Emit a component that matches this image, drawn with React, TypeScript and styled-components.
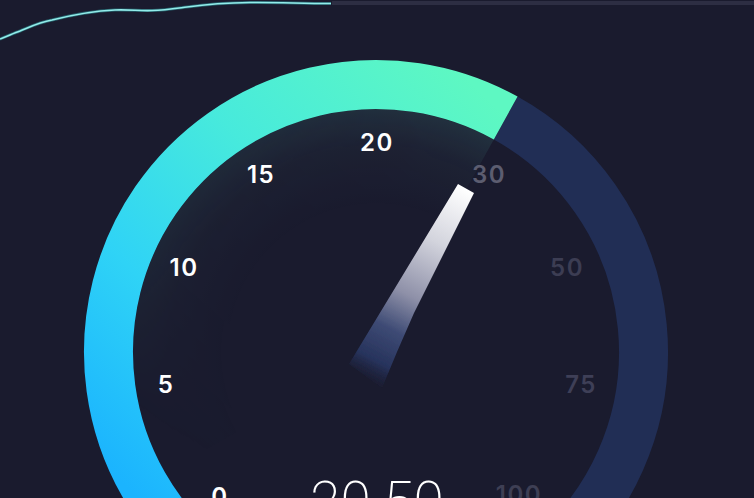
import React from "react";
import styled, { createGlobalStyle } from "styled-components";

const Global = createGlobalStyle`
  html, body { margin: 0; padding: 0; background: #1a1b2e; overflow: hidden; }
`;

const Page = styled.div`
  width: 754px;
  height: 498px;
  overflow: hidden;
  background: #1a1b2e;
  display: flex;
  flex-direction: column;
`;

const Header = styled.div`
  height: 42px;
  display: flex;
  align-items: flex-start;
  flex: none;
`;

const Wave = styled.svg`
  width: 332px;
  height: 42px;
  display: block;
  flex: none;
`;

const Rule = styled.div`
  flex: 1;
  height: 4px;
  margin-top: 1px;
  background: #2d2e43;
`;

const Gauge = styled.div`
  position: relative;
  flex: 1;
`;

const Dial = styled.svg`
  display: block;
  width: 754px;
  height: 456px;
`;

const Tick = styled.span<{ $x: number; $y: number; $tone: string }>`
  position: absolute;
  left: ${(p) => p.$x}px;
  top: ${(p) => p.$y - 42}px;
  transform: translate(-50%, -50%);
  font-family: "Inter", "Liberation Sans", sans-serif;
  font-size: 24px;
  font-weight: 600;
  letter-spacing: 1.5px;
  line-height: 1;
  color: ${(p) => p.$tone};
`;

const Speed = styled.span`
  position: absolute;
  left: 377px;
  top: 433px;
  transform: translateX(-50%);
  font-family: "Roboto", "Liberation Sans", sans-serif;
  font-size: 55px;
  font-weight: 200;
  line-height: 1;
  color: #ffffff;
`;

const CX = 376;
const CY = 352;
const RM = 267.5;
const RI = 243;

const pt = (deg: number, r: number) => {
  const a = (deg * Math.PI) / 180;
  return `${(CX + r * Math.sin(a)).toFixed(2)} ${(CY - r * Math.cos(a)).toFixed(2)}`;
};
const arc = (from: number, to: number, r: number) =>
  `M ${pt(from, r)} A ${r} ${r} 0 ${to - from > 180 ? 1 : 0} 1 ${pt(to, r)}`;
const sector = (from: number, to: number, r: number) =>
  `M ${CX} ${CY} L ${pt(from, r)} A ${r} ${r} 0 ${to - from > 180 ? 1 : 0} 1 ${pt(to, r)} Z`;

const ticks: { label: string; x: number; y: number; tone: string }[] = [
  { label: "0", x: 220, y: 497, tone: "#ffffff" },
  { label: "5", x: 166, y: 385, tone: "#ffffff" },
  { label: "10", x: 184, y: 268, tone: "#ffffff" },
  { label: "15", x: 261, y: 175, tone: "#ffffff" },
  { label: "20", x: 377, y: 143, tone: "#ffffff" },
  { label: "30", x: 489, y: 175, tone: "#5c5d70" },
  { label: "50", x: 567, y: 268, tone: "#3c3d53" },
  { label: "75", x: 581, y: 385, tone: "#3e3f57" },
  { label: "100", x: 519, y: 495, tone: "#3e3f54" },
];

const wavePath =
  "M0 39 C8 36 14 33 20 31 C32 26 40 22 52 20 C68 16 92 11 115 10 C130 9.500 140 11 152 10.500 C165 10 175 8.500 187 7 C205 4.500 225 2.800 250 2.500 C280 2.200 300 3.500 331 3.500";

export default function App() {
  return (
    <Page>
      <Global />
      <Header>
        <Wave viewBox="0 0 332 42">
          <path d={wavePath} fill="none" stroke="#2f9ea3" strokeWidth="3" strokeOpacity="0.55" />
          <path d={wavePath} fill="none" stroke="#93ecea" strokeWidth="1.6" />
        </Wave>
        <Rule />
      </Header>
      <Gauge>
        <Dial viewBox="0 42 754 456">
          <defs>
            <linearGradient id="fill" gradientUnits="userSpaceOnUse" x1="130" y1="490" x2="500" y2="110">
              <stop offset="0" stopColor="#1bb4fe" />
              <stop offset="0.3" stopColor="#2fd3f6" />
              <stop offset="0.62" stopColor="#47eadc" />
              <stop offset="1" stopColor="#5ef8c2" />
            </linearGradient>
            <radialGradient id="glow" gradientUnits="userSpaceOnUse" cx={CX} cy={CY} r={RI}>
              <stop offset="0.6" stopColor="#6fd0c0" stopOpacity="0" />
              <stop offset="0.85" stopColor="#6fd0c0" stopOpacity="0.04" />
              <stop offset="1" stopColor="#5fdcc4" stopOpacity="0.11" />
            </radialGradient>
            <linearGradient id="fadeLeft" gradientUnits="userSpaceOnUse" x1="150" y1="420" x2="420" y2="110">
              <stop offset="0" stopColor="#fff" stopOpacity="0" />
              <stop offset="0.3" stopColor="#fff" stopOpacity="0.5" />
              <stop offset="1" stopColor="#fff" stopOpacity="1" />
            </linearGradient>
            <mask id="fade" maskUnits="userSpaceOnUse" x="0" y="0" width="754" height="498">
              <rect x="0" y="0" width="754" height="498" fill="url(#fadeLeft)" />
            </mask>
            <linearGradient id="needle" gradientUnits="userSpaceOnUse" x1="466" y1="189" x2="366" y2="380">
              <stop offset="0" stopColor="#ffffff" />
              <stop offset="0.28" stopColor="#d3d4dd" />
              <stop offset="0.56" stopColor="#8e90a8" />
              <stop offset="0.74" stopColor="#3d4a74" />
              <stop offset="0.9" stopColor="#27335c" />
              <stop offset="1" stopColor="#1f2545" stopOpacity="0.1" />
            </linearGradient>
            <filter id="soft" x="-20%" y="-10%" width="140%" height="120%">
              <feGaussianBlur stdDeviation="0.7" />
            </filter>
          </defs>
          <path d={sector(-120, 29, RI)} fill="url(#glow)" mask="url(#fade)" />
          <path d={arc(29, 140, RM)} fill="none" stroke="#212e55" strokeWidth="49" />
          <path d={arc(-140, 29, RM)} fill="none" stroke="url(#fill)" strokeWidth="49" />
          <path d="M458 184 L474 193 L414 313 Q397 351 382 388 L349 364 Z" fill="url(#needle)" filter="url(#soft)" />
        </Dial>
        {ticks.map((t) => (
          <Tick key={t.label} $x={t.x} $y={t.y} $tone={t.tone}>
            {t.label}
          </Tick>
        ))}
        <Speed>20.50</Speed>
      </Gauge>
    </Page>
  );
}
